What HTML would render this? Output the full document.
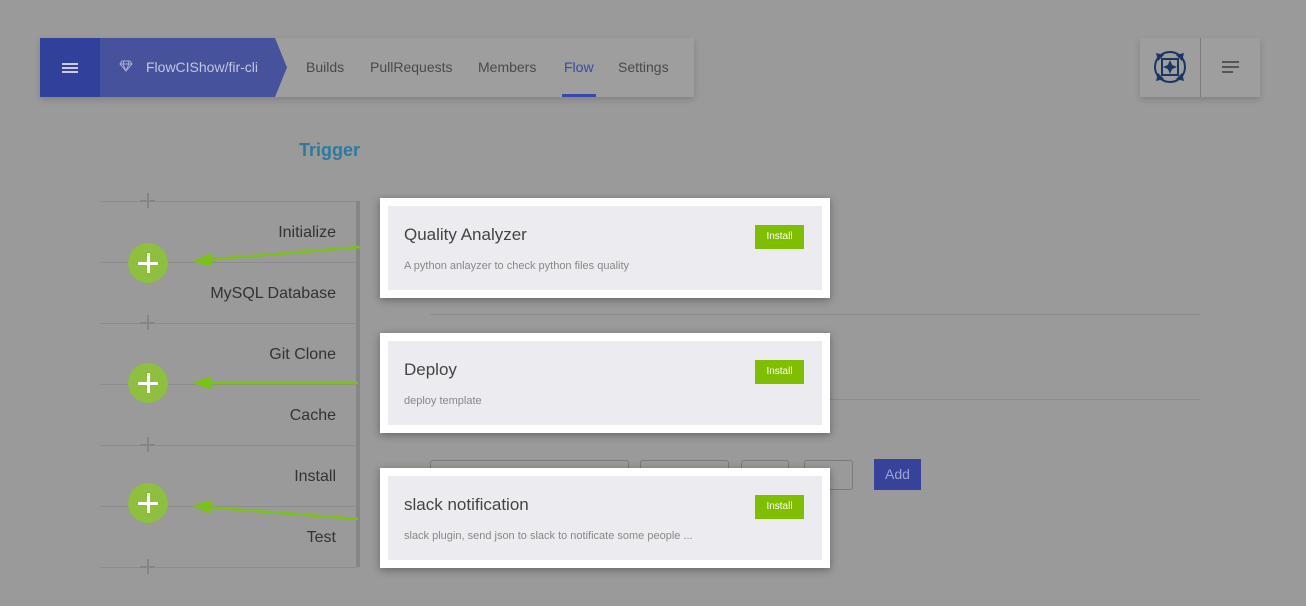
<!DOCTYPE html>
<html><head><style>
*{margin:0;padding:0;box-sizing:border-box}
body{width:1306px;height:606px;background:#9a9a9a;font-family:"Liberation Sans",sans-serif;position:relative;overflow:hidden}
.a{position:absolute}
.nav{left:40px;top:38px;width:654px;height:59px;background:#9e9e9e;box-shadow:0 3px 6px rgba(0,0,0,.15)}
.nl{top:0;font-size:14px;color:#4a4a4a;line-height:59px}
.line{height:1px;background:#8c8c8c}
.lbl{right:970px;font-size:16px;color:#333;text-align:right;white-space:nowrap}
.sp{left:140px;width:16px;height:16px}
.sp:before{content:"";position:absolute;left:7px;top:0;width:1.5px;height:15px;background:#858585}
.sp:after{content:"";position:absolute;left:0;top:7px;width:15px;height:1.5px;background:#858585}
.gc{width:40px;height:40px;border-radius:50%;background:#8ebf3e;left:128px}
.gc:before{content:"";position:absolute;left:19px;top:10px;width:3px;height:20px;background:#fff}
.gc:after{content:"";position:absolute;left:10px;top:19px;width:20px;height:3px;background:#fff}
.card{left:380px;width:450px;height:100px;background:#fff;box-shadow:0 2px 8px rgba(0,0,0,.35)}
.in{position:absolute;left:8px;top:8px;right:8px;bottom:8px;background:#ececf0}
.t{position:absolute;left:16px;top:19px;font-size:17px;color:#444}
.d{position:absolute;left:16px;top:54px;font-size:11px;color:#888}
.b{position:absolute;left:367px;top:19px;width:49px;height:24px;background:#80bf00;color:#fff;font-size:10px;line-height:24px;text-align:center}
.inp{top:460px;height:30px;border:1px solid #7a7a7a;border-radius:3px}
</style></head><body>
<div class="a nav">
 <div class="a" style="left:0;top:0;width:60px;height:59px;background:#31409a"></div>
 <div class="a" style="left:22px;top:25px;width:16px;height:10px;border-top:2px solid #ccd;border-bottom:2px solid #ccd"><div style="margin-top:2px;height:2px;background:#ccd"></div></div>
 <svg class="a" style="left:60px;top:0" width="188" height="59"><polygon points="0,0 175,0 187,29.5 175,59 0,59" fill="#46529b"/></svg>
 <svg class="a" style="left:79px;top:22px" width="14" height="12" viewBox="0 0 14 12"><path d="M3 1h8l2 3-6 7-6-7zM1 4h12M5 1l-1 3 3 7 3-7-1-3" fill="none" stroke="#a9acd0" stroke-width="1"/></svg>
 <div class="a nl" style="left:106px;color:#c3c6e0">FlowCIShow/fir-cli</div>
 <div class="a nl" style="left:266px">Builds</div>
 <div class="a nl" style="left:330px">PullRequests</div>
 <div class="a nl" style="left:438px">Members</div>
 <div class="a nl" style="left:524px;color:#3a48a8">Flow</div>
 <div class="a" style="left:522px;top:56px;width:34px;height:3px;background:#3a48a8"></div>
 <div class="a nl" style="left:578px">Settings</div>
</div>
<div class="a" style="left:1140px;top:38px;width:120px;height:59px;background:#9e9e9e;box-shadow:0 3px 6px rgba(0,0,0,.15)"></div>
<div class="a" style="left:1200px;top:38px;width:1px;height:59px;background:#7c7c7c"></div>
<svg class="a" style="left:1151px;top:48px" width="38" height="38" viewBox="0 0 38 38"><g fill="none" stroke="#1d3563" stroke-width="2"><circle cx="19" cy="19" r="15"/><rect x="11" y="11" width="16" height="16"/></g><g fill="#1d3563"><path d="M19 12l3 7-3 7-3-7z"/><path d="M12 19l7-3 7 3-7 3z"/><path d="M5 5l8 2-6 6z"/><path d="M33 5l-2 8-6-6z"/><path d="M5 33l2-8 6 6z"/><path d="M33 33l-8-2 6-6z"/></g></svg>
<div class="a" style="left:1222px;top:61px;width:17px;height:2px;background:#555"></div>
<div class="a" style="left:1222px;top:66px;width:17px;height:2px;background:#555"></div>
<div class="a" style="left:1222px;top:71px;width:11px;height:2px;background:#555"></div>

<div class="a" style="left:299px;top:140px;font-size:18px;font-weight:bold;color:#2c7aa0">Trigger</div>

<div class="a line" style="left:100px;top:201px;width:257px"></div>
<div class="a line" style="left:100px;top:262px;width:257px"></div>
<div class="a line" style="left:100px;top:323px;width:257px"></div>
<div class="a line" style="left:100px;top:384px;width:257px"></div>
<div class="a line" style="left:100px;top:445px;width:257px"></div>
<div class="a line" style="left:100px;top:506px;width:257px"></div>
<div class="a line" style="left:100px;top:567px;width:257px"></div>
<div class="a" style="left:356px;top:201px;width:4px;height:366px;background:#868686"></div>
<div class="a sp" style="top:193px;background:#9a9a9a"></div>
<div class="a sp" style="top:315px;background:#9a9a9a"></div>
<div class="a sp" style="top:437px;background:#9a9a9a"></div>
<div class="a sp" style="top:559px;background:#9a9a9a"></div>
<div class="a lbl" style="top:224px">Initialize</div>
<div class="a lbl" style="top:285px">MySQL Database</div>
<div class="a lbl" style="top:346px">Git Clone</div>
<div class="a lbl" style="top:407px">Cache</div>
<div class="a lbl" style="top:468px">Install</div>
<div class="a lbl" style="top:529px">Test</div>
<div class="a gc" style="top:243px"></div>
<div class="a gc" style="top:363px"></div>
<div class="a gc" style="top:483px"></div>
<svg class="a" style="left:0;top:0" width="400" height="606"><g stroke="#7ac214" stroke-width="2.5" fill="#7ac214"><line x1="360" y1="247" x2="205" y2="260"/><polygon points="196,261 210,255 210,265"/><line x1="358" y1="383" x2="205" y2="383"/><polygon points="196,383 210,378 210,388"/><line x1="358" y1="519" x2="205" y2="507"/><polygon points="196,506 210,502 209,512"/></g></svg>

<div class="a line" style="left:430px;top:314px;width:770px"></div>
<div class="a line" style="left:430px;top:399px;width:770px"></div>
<div class="a inp" style="left:430px;width:199px"></div>
<div class="a inp" style="left:640px;width:89px"></div>
<div class="a inp" style="left:741px;width:48px"></div>
<div class="a inp" style="left:804px;width:49px"></div>
<div class="a" style="left:874px;top:459px;width:47px;height:31px;background:#37439a;color:#9da3cc;font-size:14px;line-height:31px;text-align:center">Add</div>

<div class="a card" style="top:198px"><div class="in"><div class="t">Quality Analyzer</div><div class="d">A python anlayzer to check python files quality</div><div class="b">Install</div></div></div>
<div class="a card" style="top:333px"><div class="in"><div class="t">Deploy</div><div class="d">deploy template</div><div class="b">Install</div></div></div>
<div class="a card" style="top:468px"><div class="in"><div class="t">slack notification</div><div class="d">slack plugin, send json to slack to notificate some people ...</div><div class="b">Install</div></div></div>
</body></html>
